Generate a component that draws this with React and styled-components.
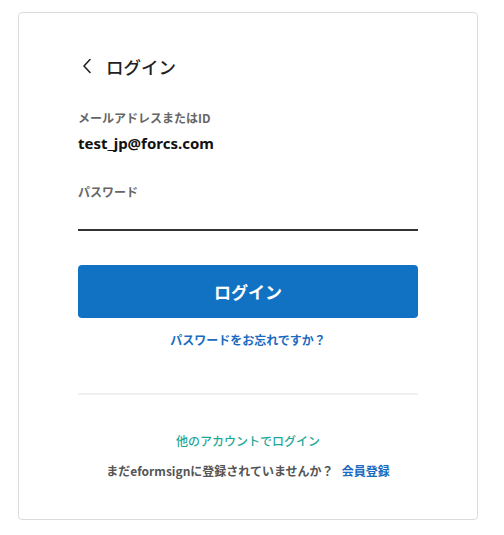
import React from "react";
import styled, { createGlobalStyle } from "styled-components";

const GlobalStyle = createGlobalStyle`
  body {
    margin: 0;
    background: #fff;
    font-family: "Noto Sans CJK JP", "Noto Sans", sans-serif;
  }
`;

const Card = styled.div`
  box-sizing: border-box;
  width: 460px;
  height: 508px;
  margin: 12px 0 0 18px;
  border: 1px solid #dcdcdc;
  border-radius: 4px;
  padding: 34px 59px 0;
  display: flex;
  flex-direction: column;
`;

const Title = styled.h1`
  margin: 0;
  display: flex;
  align-items: center;
  gap: 14px;
  font-size: 17.5px;
  font-weight: 500;
  color: #222;
  height: 38px;
`;

const BackButton = styled.button`
  border: none;
  background: none;
  padding: 0 0 0 4px;
  display: flex;
  align-items: center;
  cursor: pointer;
`;

const Field = styled.div`
  display: flex;
  flex-direction: column;
  margin-top: ${(p) => p.$top}px;
`;

const Label = styled.label`
  font-size: 12px;
  font-weight: 700;
  color: #666;
  line-height: 18px;
`;

const Value = styled.div`
  margin-top: 5px;
  font-family: "Noto Sans", sans-serif;
  font-size: 15px;
  font-weight: 700;
  color: #111;
  line-height: 22px;
`;

const Input = styled.input`
  margin-top: 6px;
  height: 22px;
  border: none;
  border-bottom: 2px solid #333;
  outline: none;
  padding: 0;
  font-size: 15px;
`;

const Primary = styled.button`
  margin-top: 34px;
  height: 53px;
  border: none;
  border-radius: 4px;
  background: #1172c4;
  color: #fff;
  font-family: inherit;
  font-size: 17px;
  font-weight: 700;
  cursor: pointer;
`;

const LinkText = styled.a`
  display: block;
  text-align: center;
  font-size: 12px;
  font-weight: ${(p) => (p.$teal ? 500 : 700)};
  color: ${(p) => (p.$teal ? "#1fa898" : "#1a6bbf")};
  text-decoration: none;
  cursor: pointer;
  margin-top: ${(p) => p.$top || 0}px;
  line-height: 18px;
`;

const Divider = styled.hr`
  margin: 44px 0 0;
  border: none;
  border-top: 2px solid #f0f0f0;
`;

const SignUp = styled.p`
  margin: 12px 0 0;
  text-align: center;
  font-size: 12px;
  font-weight: 700;
  color: #555;
  line-height: 18px;
  a {
    margin-left: 8px;
    color: #1a6bbf;
    text-decoration: none;
  }
`;

export default function App() {
  return (
    <>
      <GlobalStyle />
      <Card>
        <Title>
          <BackButton aria-label="back">
            <svg width="10" height="16" viewBox="0 0 10 16" fill="none">
              <path d="M8 1.5 L2 8 L8 14.5" stroke="#222" strokeWidth="1.6" strokeLinecap="round" strokeLinejoin="round" />
            </svg>
          </BackButton>
          ログイン
        </Title>
        <Field $top={24}>
          <Label>メールアドレスまたはID</Label>
          <Value>test_jp@forcs.com</Value>
        </Field>
        <Field $top={29}>
          <Label>パスワード</Label>
          <Input type="password" />
        </Field>
        <Primary>ログイン</Primary>
        <LinkText $top={13}>パスワードをお忘れですか？</LinkText>
        <Divider />
        <LinkText $teal $top={37}>他のアカウントでログイン</LinkText>
        <SignUp>
          まだeformsignに登録されていませんか？<a href="#">会員登録</a>
        </SignUp>
      </Card>
    </>
  );
}
